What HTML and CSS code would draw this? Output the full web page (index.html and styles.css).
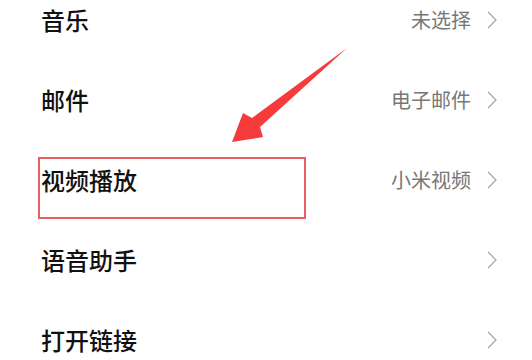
FILE: index.html
```html
<!DOCTYPE html>
<html lang="zh-CN">
<head>
<meta charset="utf-8">
<link rel="stylesheet" href="styles.css">
</head>
<body>
<div class="screen">
  <ul class="list">
    <li class="row"><span class="label">音乐</span><span class="value">未选择</span><span class="chev"><svg viewBox="0 0 10 18" width="10" height="18"><path d="M1 1 L9 9 L1 17" fill="none" stroke="#a8a8a8" stroke-width="1.3"/></svg></span></li>
    <li class="row"><span class="label">邮件</span><span class="value">电子邮件</span><span class="chev"><svg viewBox="0 0 10 18" width="10" height="18"><path d="M1 1 L9 9 L1 17" fill="none" stroke="#a8a8a8" stroke-width="1.3"/></svg></span></li>
    <li class="row"><span class="label">视频播放</span><span class="value">小米视频</span><span class="chev"><svg viewBox="0 0 10 18" width="10" height="18"><path d="M1 1 L9 9 L1 17" fill="none" stroke="#a8a8a8" stroke-width="1.3"/></svg></span></li>
    <li class="row"><span class="label">语音助手</span><span class="value"></span><span class="chev"><svg viewBox="0 0 10 18" width="10" height="18"><path d="M1 1 L9 9 L1 17" fill="none" stroke="#a8a8a8" stroke-width="1.3"/></svg></span></li>
    <li class="row"><span class="label">打开链接</span><span class="value"></span><span class="chev"><svg viewBox="0 0 10 18" width="10" height="18"><path d="M1 1 L9 9 L1 17" fill="none" stroke="#a8a8a8" stroke-width="1.3"/></svg></span></li>
  </ul>
  <div class="highlight"></div>
  <svg class="arrow" viewBox="0 0 532 360" width="532" height="360">
    <polygon points="347,48 260,127 263,137 232,142 243,113 252,118" fill="#f53b3b"/>
  </svg>
</div>
</body>
</html>
```
FILE: styles.css
```css
html, body {
  margin: 0;
  padding: 0;
  background: #ffffff;
}
.screen {
  position: relative;
  width: 532px;
  height: 360px;
  overflow: hidden;
  font-family: "Noto Sans CJK SC", "Noto Sans", sans-serif;
}
.list {
  list-style: none;
  margin: -20px 0 0 0;
  padding: 0 35px 0 41px;
}
.row {
  height: 80px;
  display: flex;
  align-items: center;
}
.label {
  flex: 1;
  font-size: 24px;
  font-weight: 500;
  color: #111111;
  line-height: 1;
}
.value {
  font-size: 20px;
  color: #777777;
  line-height: 1;
  margin-right: 16px;
}
.chev {
  display: flex;
  align-items: center;
  width: 10px;
  height: 18px;
}
.highlight {
  position: absolute;
  left: 38px;
  top: 157px;
  width: 268px;
  height: 62px;
  box-sizing: border-box;
  border: 2px solid #ea5f63;
}
.arrow {
  position: absolute;
  left: 0;
  top: 0;
}
```
